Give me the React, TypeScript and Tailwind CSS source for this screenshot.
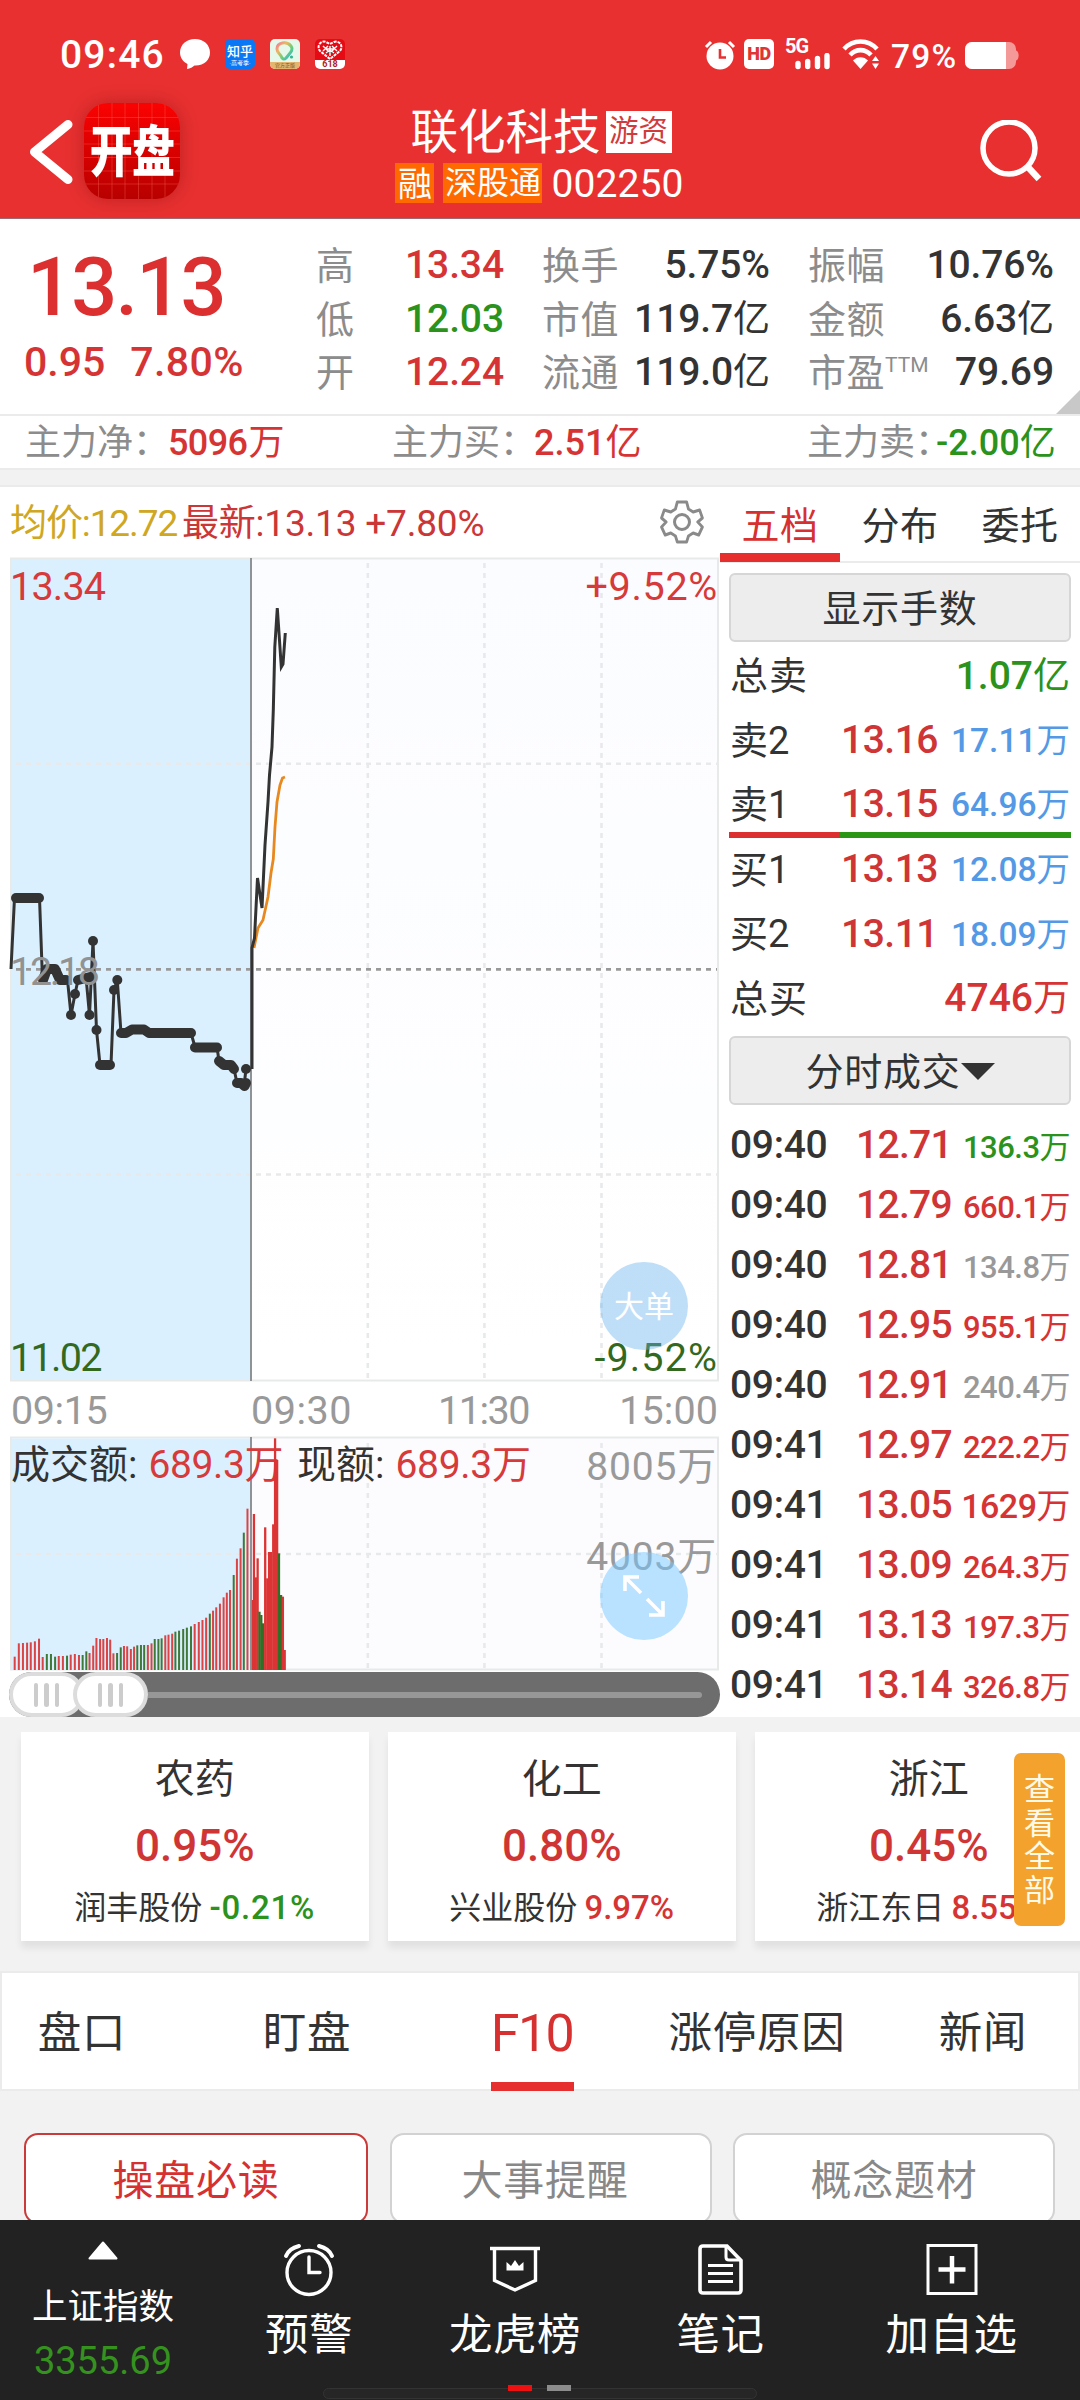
import React from "react";

const RED = "text-[#d63434]";
const GREEN = "text-[#2b921b]";
const DARK = "text-[#333333]";

function StatusBar() {
  return (
    <div className="flex h-[86px] items-start pt-[39px] pl-[60px] text-white">
      <div className="w-[120px] pt-[1px] text-[39px] leading-[30px] font-medium tracking-[1.2px]">09:46</div>
      <svg width="30" height="30" viewBox="0 0 30 30" className="shrink-0">
        <path d="M15 0C6.500 0 0 5.800 0 13.500C0 18.500 3 22.700 7.500 25L7 30C10 29.500 13 28 14.500 26.500C24 27 30 21 30 13.500C30 5.800 23.500 0 15 0Z" fill="#fff" />
      </svg>
      <div className="ml-[15px] flex h-[30px] w-[30px] flex-col items-center justify-center rounded-[5px] bg-[#0a78f5] leading-none">
        <span className="pt-[1px] text-[13px] leading-[15px] font-medium">知乎</span>
        <span className="text-[6px] leading-[7px]">·高考季·</span>
      </div>
      <div className="ml-[15px] h-[30px] w-[30px] overflow-hidden rounded-[5px] bg-[#e6f8ea]">
        <svg width="30" height="23" viewBox="0 0 30 23">
          <defs>
            <linearGradient id="ring" x1="0" y1="0" x2="1" y2="1">
              <stop offset="0" stopColor="#ef7aa0" />
              <stop offset="0.3" stopColor="#f0b65e" />
              <stop offset="0.65" stopColor="#5fd07f" />
              <stop offset="1" stopColor="#3ea6f2" />
            </linearGradient>
          </defs>
          <path d="M7 10C7 3 17 2 21 7C24 11 20 14 16 19C14 21 12 20 11 17C9 14 7 13 7 10Z" fill="none" stroke="url(#ring)" strokeWidth="3" />
          <circle cx="21.500" cy="18" r="1.600" fill="#35b58f" />
        </svg>
        <div className="flex h-[7px] items-center justify-center bg-[#e3b56f] text-[5px] leading-none text-[#80531d]">官方正版</div>
      </div>
      <div className="ml-[15px] h-[30px] w-[30px] overflow-hidden rounded-[5px] bg-[#e50a14]">
        <svg width="30" height="21" viewBox="0 0 30 21">
          <path d="M15 20L5 12C1 7 6 1 11 3L15 5L19 3C24 1 29 7 25 12Z" fill="none" stroke="#fff" strokeWidth="2" strokeDasharray="3 1" />
          <path d="M8 7l6 6M22 7l-6 6M8 12l5-5M22 12l-5-5M15 7v10M11 10h8M11 14l4-3 4 3" stroke="#fff" strokeWidth="1.400" />
        </svg>
        <div className="flex h-[9px] items-center justify-center bg-white text-[9px] leading-none font-bold text-[#b31e1e]">618</div>
      </div>

      <svg className="ml-[359px] shrink-0" width="32" height="31" viewBox="0 0 32 31">
        <circle cx="16" cy="17" r="13.500" fill="#fff" />
        <path d="M2 8L7 3M30 8L25 3" stroke="#fff" strokeWidth="3" />
        <path d="M16 10V18.500H22" fill="none" stroke="#e83030" strokeWidth="2.600" />
      </svg>
      <div className="ml-[8px] flex h-[30px] w-[30px] shrink-0 items-center justify-center rounded-[5px] bg-white text-[18px] leading-none font-black tracking-[-0.5px] text-[#e03535]">HD</div>
      <div className="ml-[11px] h-[30px] w-[46px] shrink-0">
        <div className="h-[14px] text-[20px] leading-[15px] font-bold tracking-[-1px]">5G</div>
        <svg width="46" height="17" viewBox="0 0 46 17" className="ml-[10px]">
          <path d="M3 10.500V13.500M12.700 8.500V13.500M22.500 5.500V13.500M32 2.500V13.500" stroke="#fff" strokeWidth="5.400" strokeLinecap="round" />
        </svg>
      </div>
      <svg className="ml-[11px] shrink-0" width="40" height="31" viewBox="0 0 40 31">
        <path d="M2 10C11 0 26 0 35 10M8 16C14 9.500 23 9.500 29 16" fill="none" stroke="#fff" strokeWidth="4.600" />
        <path d="M18.500 30L11 21.500C15 17 22 17 26 21.500Z" fill="#fff" />
        <path d="M30 22L33.500 17L37 22ZM30 24.500H37L33.500 30Z" fill="#fff" />
      </svg>
      <div className="ml-[9px] w-[74px] shrink-0 pt-[5px] text-[33.500px] leading-[26px] font-medium tracking-[1.2px]">79%</div>
      <svg className="mt-[3px] shrink-0" width="54" height="28" viewBox="0 0 54 28">
        <rect x="0" y="0" width="51" height="27" rx="7" fill="#fff" fillOpacity="0.500" />
        <path d="M7 0H41V27H7A7 7 0 0 1 0 20V7A7 7 0 0 1 7 0Z" fill="#fff" />
        <path d="M51 8.500C54.500 9 54.500 18 51 18.500Z" fill="#fff" fillOpacity="0.500" />
      </svg>
    </div>
  );
}

function TitleBar() {
  return (
    <div className="flex h-[132px] justify-between text-white">
      <div className="flex w-[300px] pt-[17px] pl-[28px]">
        <svg className="mt-[15px]" width="46" height="68" viewBox="0 0 46 68">
          <path d="M40 6.500L6.500 34L40 61.500" fill="none" stroke="#fff" strokeWidth="9" strokeLinecap="round" strokeLinejoin="round" />
        </svg>
        <div className="relative ml-[10px] flex h-[96px] w-[96px] items-center justify-center overflow-hidden rounded-[24px] bg-linear-to-b from-[#fb0202] to-[#b80000] shadow-[0_0_18px_rgba(90,0,0,0.3)]">
          <svg className="absolute inset-0" width="96" height="96" viewBox="0 0 96 96">
            <path d="M14.500 0V96M28 0V96M41 0V96M54.500 0V96M68 0V96M81 0V96M0 14.500H96M0 28H96M0 41H96M0 54.500H96M0 68H96M0 81H96" stroke="#ff6a5a" strokeOpacity="0.350" strokeWidth="1" />
          </svg>
          <span className="relative scale-y-[1.28] pt-[2px] text-[43px] leading-none font-black tracking-[-0.8px]">开盘</span>
        </div>
      </div>
      <div className="flex w-[340px] flex-col items-center pl-[2px]">
        <div className="flex h-[77px] items-center pt-[14px]">
          <span className="pt-[5px] text-[47.500px] leading-none">联化科技</span>
          <span className="ml-[5px] flex h-[42px] w-[66px] items-center justify-center bg-white text-[29.500px] leading-none text-[#d03c3c]">游资</span>
        </div>
        <div className="flex h-[39px] items-center pr-[3px]">
          <span className="flex h-[40px] w-[39px] items-center justify-center bg-[#ff6a00] pt-[2px] text-[34px] leading-none">融</span>
          <span className="ml-[9px] flex h-[40px] w-[99px] items-center justify-center bg-[#ff6a00] pt-[1px] text-[32px] leading-none">深股通</span>
          <span className="ml-[9px] pt-[3px] text-[39px] leading-none tracking-[0.1px]">002250</span>
        </div>
      </div>
      <div className="flex w-[300px] justify-end pt-[34px] pr-[35px]">
        <svg width="66" height="66" viewBox="0 0 66 66">
          <circle cx="30" cy="28" r="26" fill="none" stroke="#fff" strokeWidth="5.500" />
          <path d="M48 46L60 59" stroke="#fff" strokeWidth="6.500" />
        </svg>
      </div>
    </div>
  );
}

type Quote = { label: string; sup?: string; value: string; unit?: string; tone: string };
const quoteColumns: { width: string; rows: Quote[] }[] = [
  {
    width: "w-[188px]",
    rows: [
      { label: "高", value: "13.34", tone: RED },
      { label: "低", value: "12.03", tone: GREEN },
      { label: "开", value: "12.24", tone: RED },
    ],
  },
  {
    width: "w-[228px]",
    rows: [
      { label: "换手", value: "5.75%", tone: DARK },
      { label: "市值", value: "119.7", unit: "亿", tone: DARK },
      { label: "流通", value: "119.0", unit: "亿", tone: DARK },
    ],
  },
  {
    width: "w-[246px]",
    rows: [
      { label: "振幅", value: "10.76%", tone: DARK },
      { label: "金额", value: "6.63", unit: "亿", tone: DARK },
      { label: "市盈", sup: "TTM", value: "79.69", tone: DARK },
    ],
  },
];

function QuotePanel() {
  return (
    <div className="relative flex h-[197px] border-b-2 border-[#ebebeb] bg-white">
      <div className="w-[316px] pt-[28px]">
        <div className="pl-[27px] text-[81px] leading-[82px] font-medium tracking-[-1.8px] text-[#dc3030]">13.13</div>
        <div className="flex gap-[25px] pt-[12px] pl-[24px] text-[41px] leading-[42px] font-medium text-[#d63434]">
          <span>0.95</span>
          <span className="tracking-[0.4px]">7.80%</span>
        </div>
      </div>
      <div className="flex gap-[38px] pt-[20px]">
        {quoteColumns.map((col, i) => (
          <div key={i} className={col.width}>
            {col.rows.map((q) => (
              <div key={q.label} className="flex h-[53.500px] items-center justify-between whitespace-nowrap">
                <span className="flex pt-[1px] text-[38px] leading-none tracking-[0.5px] text-[#8c8c8c]">
                  {q.label}
                  {q.sup && <span className="text-[21px] leading-[22px] tracking-[0px]">{q.sup}</span>}
                </span>
                <span className={`text-[39px] leading-none font-medium tracking-[-0.1px] ${q.tone}`}>
                  {q.value}
                  {q.unit && <span className="text-[37px] font-normal">{q.unit}</span>}
                </span>
              </div>
            ))}
          </div>
        ))}
      </div>
      <svg className="absolute right-0 bottom-0" width="24" height="24" viewBox="0 0 24 24">
        <path d="M24 0V24H0Z" fill="#c8c8c8" />
      </svg>
    </div>
  );
}

function MainForce() {
  return (
    <div className="flex h-[54px] items-center border-b-2 border-[#ebebeb] bg-white pt-[1px] pl-[25px] text-[36px] leading-none whitespace-nowrap text-[#8c8c8c]">
      <span className="w-[143px]">主力净：</span>
      <span className={`w-[224px] font-medium tracking-[-0.6px] ${RED}`}>5096<span className="ml-[1px] font-normal">万</span></span>
      <span className="w-[142px]">主力买：</span>
      <span className={`w-[273px] font-medium ${RED}`}>2.51<span className="font-normal">亿</span></span>
      <span className="w-[129px]">主力卖：</span>
      <span className={`font-medium ${GREEN}`}>-2.00<span className="font-normal">亿</span></span>
    </div>
  );
}

/* Price series before the open: line vertices, flat runs and single ticks. */
const AUCTION_LINE =
  "11,969 14.500,898 39.500,898 42.500,980 47,969 57,969 59,980 67.500,980 71,1015 75,994 78,980 86,977 89.500,1015 93,941 96.500,1030 100,1065 111,1065 114,990 117.300,980 121,1033 128,1033 132,1030 145,1030 148,1033 191,1033 195,1047 217,1047 219,1061 224,1065 231,1065 234,1069 237,1083 244,1086 246,1069";
const FLAT_RUNS = [
  "16,898 39,898",
  "43,980 47,969 55,969 60,980 66,980",
  "78,980 90,977",
  "100,1065 110,1065",
  "121,1033 126,1033 132,1029.500 144,1029.500 149,1033 191,1033",
  "195,1047.500 217,1047.500",
  "219,1061 224,1065 231,1065 234,1069",
  "237,1083 241,1083 244.500,1086 246,1083",
];
const TICKS = [
  [71, 1015], [75, 994], [89.5, 1015], [93, 941], [96.5, 1030], [114, 990], [117.3, 980], [246, 1069],
];
const PRICE_LINE =
  "252,1069 252,948 254.500,938 257.500,878 262,908 265,845 268,802 269.500,775 272,747 273.300,710 274.800,647 277.300,608 281.300,667 283,664 285.300,633";
const AVG_LINE = "254,948 258,928 263,920 268,897 271,873 273.300,859 275,827 277,802 280,785 282.500,778 285,777";

function PriceChart() {
  return (
    <div className="relative h-[825px]">
      <svg className="absolute inset-0" width="720" height="825" viewBox="0 557 720 825">
        <defs>
          <linearGradient id="plot" x1="0" y1="0" x2="0" y2="1">
            <stop offset="0" stopColor="#fbfcff" />
            <stop offset="1" stopColor="#ffffff" />
          </linearGradient>
        </defs>
        <rect x="11" y="558.500" width="707" height="822" fill="url(#plot)" stroke="#e8eaea" strokeWidth="2" />
        <rect x="11.500" y="559" width="239.500" height="821" fill="#daf0ff" />
        <path d="M367.800 563V1380M484.400 563V1380M601.500 563V1380" stroke="#e8e9eb" strokeWidth="2.600" strokeDasharray="5 5" />
        <path d="M16 763.700H717M16 1174.500H717" stroke="#e8e9eb" strokeWidth="2.600" strokeDasharray="5 5" />
        <path d="M16 969.300H717" stroke="#999999" strokeWidth="2.800" strokeDasharray="5 5" />
        <path d="M251 558V1381" stroke="#8d9396" strokeWidth="2" />
        <polyline points={AVG_LINE} fill="none" stroke="#e8891f" strokeWidth="2.800" />
        <polyline points={AUCTION_LINE} fill="none" stroke="#333" strokeWidth="3" />
        <polyline points={PRICE_LINE} fill="none" stroke="#333" strokeWidth="3" />
        {FLAT_RUNS.map((p) => (
          <polyline key={p} points={p} fill="none" stroke="#333" strokeWidth="10" strokeLinecap="round" strokeLinejoin="round" />
        ))}
        {TICKS.map(([x, y]) => (
          <circle key={x} cx={x} cy={y} r="5" fill="#333" />
        ))}
      </svg>
      <div className="relative flex h-full flex-col justify-between pr-[2px] pl-[10px] text-[39.500px] leading-[40px]">
        <div className="flex justify-between pt-[10px] text-[#d63a3a]">
          <span className="tracking-[-0.8px]">13.34</span>
          <span className="tracking-[0.7px]">+9.52%</span>
        </div>
        <div className="pb-[2px] tracking-[-2.3px] text-[#929292]">12.18</div>
        <div className="flex justify-between pb-[4px] text-[#33691e]">
          <span className="tracking-[-1.7px]">11.02</span>
          <span className="tracking-[1.1px]">-9.52%</span>
        </div>
      </div>
      <div className="absolute top-[705px] left-[600px] flex h-[88px] w-[88px] items-center justify-center rounded-full bg-[#5fb0ea]/40 pt-[2px] text-[30px] leading-none text-white">大单</div>
    </div>
  );
}

/* Turnover bars as [x, height, up=1 / down=0], on the plot's 2.178 x 3 grid. */
const VOLUME: [number, number, number][] = [
  [32, 40, 1], [41, 80, 1], [50, 81, 1], [59, 82, 1], [67, 83, 1], [76, 86, 1], [85, 94, 1], [93, 39, 1],
  [102, 48, 0], [111, 48, 0], [120, 40, 0], [128, 42, 1], [137, 42, 1], [146, 43, 0], [154, 46, 1], [163, 48, 1],
  [172, 45, 1], [180, 45, 0], [188, 56, 0], [195, 51, 1], [203, 73, 1], [210, 96, 1], [218, 93, 1], [225, 93, 1],
  [233, 96, 1], [240, 91, 1], [247, 50, 1], [255, 51, 0], [263, 68, 0], [270, 72, 1], [277, 71, 1], [285, 63, 1],
  [292, 70, 1], [299, 74, 0], [307, 75, 0], [314, 75, 0], [322, 75, 1], [330, 80, 1], [337, 93, 0], [345, 93, 0],
  [352, 95, 0], [360, 104, 1], [367, 106, 1], [375, 109, 1], [382, 115, 0], [390, 118, 0], [399, 123, 0], [407, 127, 0],
  [416, 131, 0], [424, 138, 1], [433, 144, 1], [441, 150, 1], [449, 157, 1], [457, 169, 0], [464, 178, 1], [471, 188, 1],
  [479, 199, 1], [487, 218, 1], [494, 232, 1], [501, 240, 1], [509, 285, 0], [516, 334, 1], [524, 365, 1], [531, 412, 0],
  [539, 484, 1], [551, 210, 1], [553, 468, 1], [557, 278, 1], [561, 335, 1], [565, 175, 0], [569, 165, 0], [573, 140, 0],
  [577.500, 428, 1], [582, 275, 1], [586, 354, 1], [590, 354, 1], [595, 437, 1], [599, 695, 1], [603.500, 630, 1], [607.500, 350, 0],
  [612, 225, 0], [616, 220, 1], [620, 60, 1],
];

function VolumeChart() {
  return (
    <div className="relative h-[235px]">
      <svg className="absolute inset-0" width="720" height="235" viewBox="0 1436 720 235">
        <rect x="11" y="1437.500" width="707" height="232" fill="#fcfcff" stroke="#e8eaea" strokeWidth="2" />
        <rect x="11.500" y="1438.500" width="239.500" height="231" fill="#daf0ff" />
        <path d="M367.800 1443V1669M484.400 1443V1669M601.500 1443V1669M16 1554H717" stroke="#e8e9eb" strokeWidth="2.600" strokeDasharray="5 5" />
        <path d="M251 1437V1670" stroke="#8d9396" strokeWidth="2" />
      </svg>
      <div className="relative flex pt-[9px] pr-[3px] pl-[11px] text-[39px] leading-[40px] text-[#333]">
        <span>成交额:</span>
        <span className="ml-[11px] tracking-[-0.4px] text-[#d63a3a]">689.3万</span>
        <span className="ml-[14px]">现额:</span>
        <span className="ml-[11px] tracking-[-0.3px] text-[#d63a3a]">689.3万</span>
        <div className="ml-auto pt-[2px] text-right tracking-[0.8px] text-[#999]">
          <div>8005万</div>
          <div className="pt-[50px]">4003万</div>
        </div>
      </div>
      <svg className="absolute inset-0" width="720" height="235" viewBox="0 1436 720 235">
        {VOLUME.map(([x, h, up]) => (
          <rect
            key={x}
            x={x / 2.178 - (x < 545 ? 1 : 1.1)}
            y={1670 - h / 3}
            width={x < 545 ? 2 : 2.3}
            height={h / 3}
            fill={up ? "#dc3434" : "#336e27"}
            fillOpacity={x < 545 ? 0.92 : 1}
          />
        ))}
      </svg>
      <div className="absolute top-[116px] left-[600px] flex h-[88px] w-[88px] items-center justify-center rounded-full bg-[#73c8ff]/50">
        <svg width="44" height="44" viewBox="0 0 44 44">
          <path d="M3 17V3H17M4 4L19 19M25 25L40 40M27 41H41V27" fill="none" stroke="#fff" strokeWidth="3.600" />
        </svg>
      </div>
    </div>
  );
}

function Grip() {
  return (
    <span className="flex h-[45px] w-[75px] items-center justify-center gap-[6px] rounded-full border-4 border-[#dcdcdc] bg-white">
      <span className="h-[24px] w-[4.500px] rounded-full bg-[#cccccc]" />
      <span className="h-[24px] w-[4.500px] rounded-full bg-[#cccccc]" />
      <span className="h-[24px] w-[4.500px] rounded-full bg-[#cccccc]" />
    </span>
  );
}

function RangeSlider() {
  return (
    <div className="mt-[1px] ml-[9px] flex h-[45px] w-[711px] items-center rounded-full bg-[#6d6d6d] pr-[18px]">
      <Grip />
      <span className="-ml-[11px] flex">
        <Grip />
      </span>
      <span className="h-[6px] flex-1 rounded-r-full bg-[#979797]" />
    </div>
  );
}

function ChartColumn() {
  return (
    <div className="w-[720px]">
      <div className="flex h-[70px] items-center justify-between pr-[16px] pl-[10px] text-[37px] leading-none">
        <div className="flex pt-[2px]">
          <span className="w-[172px] tracking-[-1.1px] text-[#d0a722]">均价:12.72</span>
          <span className="tracking-[-0.2px] text-[#cb3636]">最新:13.13 +7.80%</span>
        </div>
        <svg width="44" height="44" viewBox="0 0 44 44" fill="none" stroke="#8a8a8a" strokeWidth="3" strokeLinejoin="round">
          <path d="M17 2H27L29 9L34 12L41 10L44 18L39 22L44 27L40 35L34 33L29 36L27 42H17L15 36L10 33L4 35L0 27L5 22L0 18L3 10L10 12L15 9Z" transform="translate(1.500 0) scale(.93 1)" />
          <circle cx="22" cy="22" r="7.500" />
        </svg>
      </div>
      <PriceChart />
      <div className="flex h-[54px] items-center pt-[3px] pr-[2px] pl-[11px] text-[39.500px] leading-none text-[#999]">
        <span className="w-[240px] tracking-[-0.4px]">09:15</span>
        <span className="w-[187px] tracking-[0.5px]">09:30</span>
        <span className="tracking-[-1.5px]">11:30</span>
        <span className="ml-auto tracking-[0.1px]">15:00</span>
      </div>
      <VolumeChart />
      <RangeSlider />
    </div>
  );
}

function BookRow({ label, price, amount, unit }: { label: string; price: string; amount: string; unit: string }) {
  return (
    <div className="flex h-[64.400px] items-center pt-[4px] whitespace-nowrap">
      <span className="w-[111px] text-[38px] leading-none">{label}</span>
      <span className="text-[39px] leading-none font-medium tracking-[-0.5px] text-[#d03535]">{price}</span>
      <span className="ml-auto text-[33.500px] leading-none font-medium text-[#5499e5]">
        {amount}
        <span className="font-normal">{unit}</span>
      </span>
    </div>
  );
}

function BookTotal({ label, value, unit, tone }: { label: string; value: string; unit: string; tone: string }) {
  return (
    <div className="flex h-[64.400px] items-center justify-between pt-[4px]">
      <span className="text-[38px] leading-none tracking-[1px]">{label}</span>
      <span className={`text-[39px] leading-none font-medium ${tone}`}>
        {value}
        <span className="text-[37px] font-normal">{unit}</span>
      </span>
    </div>
  );
}

const trades = [
  { time: "09:40", price: "12.71", amount: "136.3", tone: GREEN },
  { time: "09:40", price: "12.79", amount: "660.1", tone: RED },
  { time: "09:40", price: "12.81", amount: "134.8", tone: "text-[#999999]" },
  { time: "09:40", price: "12.95", amount: "955.1", tone: RED },
  { time: "09:40", price: "12.91", amount: "240.4", tone: "text-[#999999]" },
  { time: "09:41", price: "12.97", amount: "222.2", tone: RED },
  { time: "09:41", price: "13.05", amount: "1629", tone: RED, large: true },
  { time: "09:41", price: "13.09", amount: "264.3", tone: RED },
  { time: "09:41", price: "13.13", amount: "197.3", tone: RED },
  { time: "09:41", price: "13.14", amount: "326.8", tone: RED },
];

function OrderBook() {
  return (
    <div className="w-[360px] text-[#333]">
      <div className="flex h-[76px] border-b-2 border-[#ebebeb] text-[38px] leading-none tracking-[0.5px]">
        <span className="-mb-[1px] flex flex-1 items-center justify-center border-b-[9px] border-[#e62e2e] pt-[11px] text-[#d63030]">五档</span>
        <span className="flex flex-1 items-center justify-center pt-[3px]">分布</span>
        <span className="flex flex-1 items-center justify-center pt-[3px]">委托</span>
      </div>
      <div className="px-[9px] pt-[10px]">
        <div className="flex h-[69px] items-center justify-center rounded-[6px] border-2 border-[#d6d6d6] bg-[#ededed] pt-[3px] text-[38px] leading-none tracking-[0.8px]">显示手数</div>
        <div className="pr-[1px] pl-[1px]">
          <BookTotal label="总卖" value="1.07" unit="亿" tone={GREEN} />
          <BookRow label="卖2" price="13.16" amount="17.11" unit="万" />
        </div>
        <div className="h-[61px] pr-[1px] pl-[1px]">
          <BookRow label="卖1" price="13.15" amount="64.96" unit="万" />
        </div>
        <div className="flex h-[6px]">
          <span className="w-[111px] bg-[#dc3030]" />
          <span className="flex-1 bg-[#2b9616]" />
        </div>
        <div className="-mt-[2px] pr-[1px] pl-[1px]">
          <BookRow label="买1" price="13.13" amount="12.08" unit="万" />
          <BookRow label="买2" price="13.11" amount="18.09" unit="万" />
          <BookTotal label="总买" value="4746" unit="万" tone={RED} />
        </div>
        <div className="mt-[7px] flex h-[69px] items-center justify-center rounded-[6px] border-2 border-[#d6d6d6] bg-[#ededed] pt-[3px] text-[38px] leading-none tracking-[0.8px]">
          分时成交
          <svg width="34" height="17" viewBox="0 0 34 17">
            <path d="M0 0H34L17 17Z" fill="#333" />
          </svg>
        </div>
        <div className="pt-[9px]">
          {trades.map((t, i) => (
            <div key={i} className="flex h-[60px] items-baseline pt-[9px] pr-[1px] pl-[1px] text-[39px] leading-[44px] font-medium">
              <span className="w-[126px] tracking-[-0.3px]">{t.time}</span>
              <span className="tracking-[-0.7px] text-[#d03535]">{t.price}</span>
              <span className={`ml-auto tracking-[-0.5px] ${t.large ? "text-[34px]" : "text-[31px]"} ${t.tone}`}>
                {t.amount}
                <span className="font-normal">万</span>
              </span>
            </div>
          ))}
        </div>
      </div>
    </div>
  );
}

const sectors = [
  { name: "农药", change: "0.95%", stock: "润丰股份", delta: "-0.21%", tone: GREEN, spacing: "tracking-[0.8px]" },
  { name: "化工", change: "0.80%", stock: "兴业股份", delta: "9.97%", tone: RED, spacing: "tracking-[0px]" },
  { name: "浙江", change: "0.45%", stock: "浙江东日", delta: "8.55%", tone: RED, spacing: "tracking-[0px]" },
];

function Sectors() {
  return (
    <div className="relative h-[254px] overflow-hidden bg-[#f2f2f2] pt-[15px] pl-[20.500px]">
      <div className="flex w-max gap-[18.500px]">
        {sectors.map((s) => (
          <div key={s.name} className="flex h-[209px] w-[348.500px] flex-col items-center bg-white pt-[26px] shadow-[0_7px_7px_rgba(0,0,0,0.07)]">
            <span className="text-[40px] leading-[44px] text-[#333]">{s.name}</span>
            <span className="mt-[20px] text-[44px] leading-[48px] font-medium text-[#d03535]">{s.change}</span>
            <span className="mt-[18px] flex items-center text-[32px] leading-[40px] text-[#333]">
              {s.stock}
              <span className={`ml-[7px] text-[33px] font-medium ${s.spacing} ${s.tone}`}>{s.delta}</span>
            </span>
          </div>
        ))}
      </div>
      <div className="absolute top-[36px] left-[1014px] flex h-[173px] w-[51px] flex-col items-center justify-center rounded-[7px] bg-[#f4a22e] pt-[1px] text-[31px] leading-[33.500px] text-[#fffbe8]">
        <span>查</span>
        <span>看</span>
        <span>全</span>
        <span>部</span>
      </div>
    </div>
  );
}

function SectionTabs() {
  return (
    <div className="flex h-[120px] items-stretch border-2 border-[#ebebeb] bg-white text-[43.500px] leading-none tracking-[0.8px] text-[#333]">
      <span className="flex w-[160px] items-center justify-center pt-[6px]">盘口</span>
      <span className="flex w-[290px] items-center justify-center pt-[6px]">盯盘</span>
      <span className="flex w-[160px] justify-center">
        <span className="-mb-[2px] flex w-[83px] items-center justify-center border-b-[9px] border-[#e62e2e] pt-[13px] text-[52px] tracking-[-1.5px] text-[#d63030]">F10</span>
      </span>
      <span className="flex w-[290px] items-center justify-center pt-[6px]">涨停原因</span>
      <span className="flex w-[162px] items-center justify-center pt-[6px]">新闻</span>
    </div>
  );
}

function SubTabs() {
  return (
    <div className="flex h-[129px] gap-[21.500px] overflow-hidden bg-[#f2f2f2] pt-[42px] pr-[24px] pl-[24px] text-[41px] leading-none tracking-[0.8px] text-[#888]">
      <span className="flex h-[91px] w-[344px] shrink-0 items-center justify-center rounded-[14px] border-2 border-[#cb3a3a] bg-white pt-[5px] text-[#d63030]">操盘必读</span>
      <span className="flex h-[91px] w-[322px] shrink-0 items-center justify-center rounded-[14px] border-2 border-[#d2d2d2] bg-white pt-[5px] pr-[11px]">大事提醒</span>
      <span className="flex h-[91px] w-[322px] shrink-0 items-center justify-center rounded-[14px] border-2 border-[#d2d2d2] bg-white pt-[5px]">概念题材</span>
    </div>
  );
}

function NavItem({ label, width, children }: { label: string; width: string; children: React.ReactNode }) {
  return (
    <div className={`flex flex-col items-center pt-[22px] ${width}`}>
      <svg width="54" height="56" viewBox="0 0 54 56" fill="none" stroke="#fff" strokeWidth="3">
        {children}
      </svg>
      <span className="mt-[16px] text-[43.500px] leading-[44px] tracking-[0.5px]">{label}</span>
    </div>
  );
}

function BottomBar() {
  return (
    <div className="relative flex h-[180px] bg-[#222222] text-white">
      <div className="flex w-[206px] flex-col items-center pt-[21px]">
        <svg width="30" height="19" viewBox="0 0 30 19">
          <path d="M15 1.500L28.500 17.500H1.500Z" fill="#fff" stroke="#fff" strokeWidth="2" strokeLinejoin="round" />
        </svg>
        <span className="mt-[29px] text-[35.500px] leading-[36px]">上证指数</span>
        <span className="mt-[16px] text-[38px] leading-[40px] text-[#35921f]">3355.69</span>
      </div>
      <NavItem label="预警" width="w-[206px]">
        <circle cx="27" cy="30.500" r="22" strokeWidth="3.400" />
        <path d="M27 15V30.500H38" strokeWidth="3.400" strokeLinecap="round" />
        <path d="M4 14C6 9 11 5.500 17 4M50 14C48 9 43 5.500 37 4" strokeWidth="4" strokeLinecap="round" />
      </NavItem>
      <NavItem label="龙虎榜" width="w-[206px]">
        <path d="M2 6.500H52" strokeWidth="3.400" />
        <path d="M6.500 6V38.500L27 48L47.500 38.500V6" strokeWidth="3.400" />
        <path d="M18.500 28.500V20L23 24L27 18L31 24L35.500 20V28.500Z" fill="#fff" stroke="none" />
      </NavItem>
      <NavItem label="笔记" width="w-[205px]">
        <path d="M9 4H33L47 18.500V48C47 50 46 51 44 51H9C7 51 6 50 6 48V7C6 5 7 4 9 4Z" strokeWidth="3.600" />
        <path d="M32 5V15C32 17 33 18 35 18H46M14 23.500H39M14 31.500H39M14 39.500H39" strokeWidth="3" />
      </NavItem>
      <NavItem label="加自选" width="w-[257px]">
        <rect x="3" y="3.500" width="48" height="48" />
        <path d="M27 14V41.500M13.500 27.500H40.500" strokeWidth="4.500" />
      </NavItem>
      <div className="absolute top-[168px] left-[323px] h-[11px] w-[434px] rounded-full border border-[#333] bg-[#262626]" />
      <div className="absolute top-[165px] left-[508px] flex gap-[15px]">
        <span className="h-[6px] w-[24px] bg-[#ee1111]" />
        <span className="h-[6px] w-[24px] bg-[#8c8c8c]" />
      </div>
    </div>
  );
}

export default function App() {
  return (
    <div className="h-[2400px] w-[1080px] overflow-hidden bg-[#f2f2f2] font-['Roboto','Noto_Sans_CJK_SC',sans-serif]" lang="zh-CN">
      <div className="h-[219px] border-b border-[#9c6a70] bg-[#e83030]">
        <StatusBar />
        <TitleBar />
      </div>
      <QuotePanel />
      <MainForce />
      <div className="h-[17px] border-b-2 border-[#ebebeb]" />
      <div className="flex h-[1230px] bg-white">
        <ChartColumn />
        <OrderBook />
      </div>
      <Sectors />
      <SectionTabs />
      <SubTabs />
      <BottomBar />
    </div>
  );
}
